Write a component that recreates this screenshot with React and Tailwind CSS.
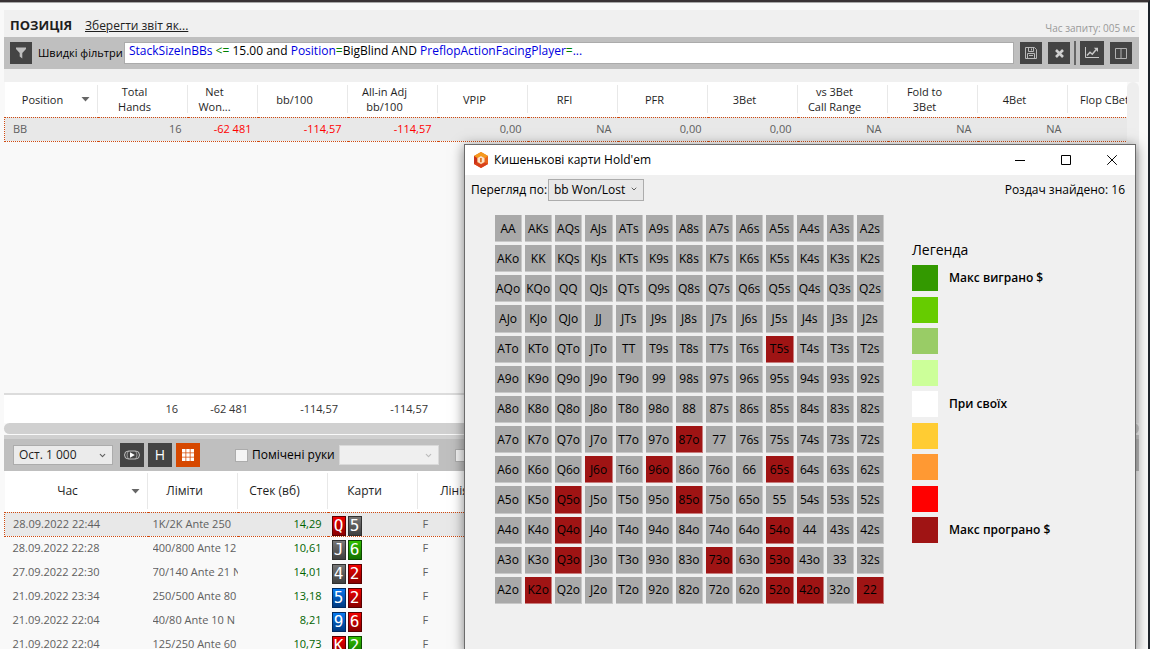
import { ChevronDown, X } from 'lucide-react'

const RANKS = 'AKQJT98765432'.split('')

const LOSING = new Set([
  'T5s', '87o', 'J6o', '96o', '65s', 'Q5o', '85o', 'Q4o',
  '54o', 'Q3o', '73o', '53o', 'K2o', '52o', '42o', '22',
])

const LEGEND = [
  { color: 'bg-[#339900]', label: 'Макс виграно $' },
  { color: 'bg-[#66cc00]' },
  { color: 'bg-[#99cc66]' },
  { color: 'bg-[#ccff99]' },
  { color: 'bg-white', label: 'При своїх' },
  { color: 'bg-[#ffcc33]' },
  { color: 'bg-[#ff9933]' },
  { color: 'bg-[#ff0000]' },
  { color: 'bg-[#9f1414]', label: 'Макс програно $' },
]

const STATS = [
  { title: ['Position'], width: 'w-[93px]', value: 'BB', sorted: true },
  { title: ['Total', 'Hands'], width: 'w-[90px]', value: '16', total: '16' },
  { title: ['Net', 'Won...'], width: 'w-[70px]', value: '-62 481', total: '-62 481' },
  { title: ['bb/100'], width: 'w-[90px]', value: '-114,57', total: '-114,57' },
  { title: ['All-in Adj', 'bb/100'], width: 'w-[90px]', value: '-114,57', total: '-114,57' },
  { title: ['VPIP'], width: 'w-[90px]', value: '0,00' },
  { title: ['RFI'], width: 'w-[90px]', value: 'NA' },
  { title: ['PFR'], width: 'w-[90px]', value: '0,00' },
  { title: ['3Bet'], width: 'w-[90px]', value: '0,00' },
  { title: ['vs 3Bet', 'Call Range'], width: 'w-[90px]', value: 'NA' },
  { title: ['Fold to', '3Bet'], width: 'w-[90px]', value: 'NA' },
  { title: ['4Bet'], width: 'w-[90px]', value: 'NA' },
  { title: ['Flop CBet'], width: 'w-[90px]', value: '' },
]

const HAND_COLUMNS = [
  { title: 'Час', width: 'w-[143px]', sorted: true },
  { title: 'Ліміти', width: 'w-[90px]' },
  { title: 'Стек (вб)', width: 'w-[90px]' },
  { title: 'Карти', width: 'w-[90px]' },
  { title: 'Лінія', width: 'w-[90px]' },
]

// suits: h - red, s - grey, c - green, d - blue
const HANDS = [
  { time: '28.09.2022 22:44', limit: '1K/2K Ante 250', stack: '14,29', cards: ['Qh', '5s'] },
  { time: '28.09.2022 22:28', limit: '400/800 Ante 12', stack: '10,61', cards: ['Js', '6c'] },
  { time: '27.09.2022 22:30', limit: '70/140 Ante 21 N', stack: '14,01', cards: ['4s', '2h'] },
  { time: '21.09.2022 23:34', limit: '250/500 Ante 80', stack: '13,18', cards: ['5d', '2h'] },
  { time: '21.09.2022 22:04', limit: '40/80 Ante 10 N', stack: '8,21', cards: ['9d', '6h'] },
  { time: '21.09.2022 22:04', limit: '125/250 Ante 60', stack: '10,73', cards: ['Kh', '2c'] },
]

const SUITS = {
  h: 'from-[#f00000] to-[#8a0000] border-[#5a0000]',
  s: 'from-[#777777] to-[#404040] border-[#303030]',
  c: 'from-[#30c000] to-[#147000] border-[#0c4a00]',
  d: 'from-[#0878f0] to-[#003a80] border-[#002a60]',
}

const SELECTED_ROW = 'h-6 border border-dotted border-[#d04a10] bg-[#e8e8e8]'

function handName(row, col) {
  if (row === col) return RANKS[row] + RANKS[col]
  return row < col ? `${RANKS[row]}${RANKS[col]}s` : `${RANKS[col]}${RANKS[row]}o`
}

function SortArrow() {
  return (
    <svg width="9" height="5" viewBox="0 0 9 5" className="shrink-0">
      <path d="M0.5 0h8L4.5 4.6z" fill="#666" />
    </svg>
  )
}

function Card({ card }) {
  return (
    <span className={`flex h-5 w-3.5 items-center justify-center border bg-linear-to-b font-['DejaVu_Sans_Mono',monospace] text-base leading-5 text-white ${SUITS[card[1]]}`}>
      {card[0]}
    </span>
  )
}

function ToolButton({ label, className = 'w-[22px] h-[22px] bg-[#444444]', children }) {
  return (
    <button type="button" aria-label={label} className={`flex shrink-0 items-center justify-center ${className}`}>
      {children}
    </button>
  )
}

function StatColumns() {
  return (
    <colgroup>
      {STATS.map(s => <col key={s.title.join(' ')} className={s.width} />)}
    </colgroup>
  )
}

function FilterBar() {
  return (
    <div className="flex h-8 shrink-0 items-center bg-[#bfbfbf] pr-[7px] pl-1.5">
      <ToolButton label="Фільтр">
        <svg width="10" height="12" viewBox="0 0 10 12">
          <path d="M0 0.5h10v1.5L6.3 6v5.5L3.7 9.5V6L0 2z" fill="#bdbdbd" />
        </svg>
      </ToolButton>
      <span className="ml-1.5 w-[86px] shrink-0 text-[11px] whitespace-nowrap text-black">Швидкі фільтри</span>
      <div
        role="textbox"
        aria-label="Швидкі фільтри"
        contentEditable
        suppressContentEditableWarning
        className="h-[22px] min-w-0 flex-1 overflow-hidden border border-[#ababab] bg-white px-1 leading-4 whitespace-nowrap text-black outline-none"
      >
        <span className="text-[#0000e0]">StackSizeInBBs</span> <span className="text-[#008000]">&lt;=</span> 15.00 and{' '}
        <span className="text-[#0000e0]">Position</span><span className="text-[#008000]">=</span>BigBlind AND{' '}
        <span className="text-[#0000e0]">PreflopActionFacingPlayer</span><span className="text-[#008000]">=</span>
        <span className="text-[#0000e0]">...</span>
      </div>
      <div className="ml-1.5 flex items-center gap-1.5">
        <ToolButton label="Зберегти">
          <svg width="12" height="12" viewBox="0 0 12 12" fill="none" stroke="#b8b8b8">
            <path d="M0.5 0.5h9l2 2v9h-11zM3.5 0.5v4h5v-4M2.5 11.500V6.500h7v5M6.500 1.500v2M4 8.500h4" />
          </svg>
        </ToolButton>
        <ToolButton label="Очистити">
          <svg width="9" height="9" viewBox="0 0 9 9" stroke="#d0d0d0" strokeWidth="2.6">
            <path d="M1 1l7 7M8 1L1 8" />
          </svg>
        </ToolButton>
      </div>
      <span className="mx-1 h-6 w-0.5 bg-[#666666]" />
      <div className="flex items-center gap-1.5">
        <ToolButton label="Графік" className="h-6 w-6 bg-[#444444]">
          <svg width="14" height="12" viewBox="0 0 14 12" fill="none" stroke="#c8c8c8">
            <path d="M0.5 0v10.5H14" />
            <path d="M2 8.5l3-3.3 2.3 2L11 2.8" strokeWidth="1.5" />
            <path d="M8.8 0.8H13V5z" fill="#c8c8c8" stroke="none" />
          </svg>
        </ToolButton>
        <ToolButton label="Колонки">
          <svg width="12" height="11" viewBox="0 0 12 11" fill="none" stroke="#b0b0b0">
            <path d="M0.5 0.5h11v10H0.5zM6 0.5v10" />
          </svg>
        </ToolButton>
      </div>
    </div>
  )
}

function StatsTable() {
  return (
    <table className="w-[1153px] table-fixed border-collapse text-[11px]">
      <StatColumns />
      <thead>
        <tr className="h-[35px] bg-white">
          {STATS.map(s => (
            <th key={s.title.join(' ')} scope="col" className="p-0 font-normal whitespace-nowrap">
              <div className="flex h-7 items-center border-r border-[#e8e8e8] pr-[7px]">
                <span className={`flex-1 text-center leading-[15px] ${s.sorted ? '' : 'pr-2'}`}>
                  {s.title.map(line => <span key={line} className="block">{line}</span>)}
                </span>
                {s.sorted && <SortArrow />}
              </div>
            </th>
          ))}
        </tr>
      </thead>
      <tbody>
        <tr className={SELECTED_ROW}>
          {STATS.map((s, i) => (
            <td
              key={s.title.join(' ')}
              className={`p-0 ${i === 0 ? 'pl-2 text-left' : 'pr-1.5 text-right'} ${s.value.startsWith('-') ? 'text-[#ff0000]' : 'text-[#606060]'}`}
            >
              {s.value}
            </td>
          ))}
        </tr>
      </tbody>
    </table>
  )
}

function TotalsTable() {
  return (
    <table className="w-[1153px] table-fixed border-collapse text-[11px] text-[#333333]">
      <StatColumns />
      <tbody>
        <tr className="h-7">
          {STATS.map(s => (
            <td key={s.title.join(' ')} className="p-0 pr-[9px] text-right">{s.total}</td>
          ))}
        </tr>
      </tbody>
    </table>
  )
}

function HandsToolbar() {
  return (
    <div className="flex h-8 shrink-0 items-center bg-[#bfbfbf] pl-[9px]">
      <div className="relative">
        <select aria-label="Кількість рук" className="h-5 w-[100px] appearance-none border border-[#acacac] bg-[#ebebeb] pl-[5px] leading-4">
          <option>Ост. 1 000</option>
        </select>
        <ChevronDown size={9} strokeWidth={3} className="pointer-events-none absolute top-1.5 right-1.5 text-[#606060]" />
      </div>
      <div className="ml-[7px] flex gap-1">
        <ToolButton label="Відтворити" className="h-6 w-6 bg-[#444444]">
          <svg width="16" height="10" viewBox="0 0 16 10" fill="none" stroke="#c0c0c0">
            <rect x="0.5" y="1" width="15" height="8" rx="4" />
            <path d="M5 1a5 5 0 0 0 0 8M11 1a5 5 0 0 1 0 8" strokeWidth="0.7" />
            <path d="M6 2.3L10.8 5L6 7.7z" fill="#fff" stroke="none" />
          </svg>
        </ToolButton>
        <ToolButton label="H" className="h-6 w-6 bg-[#444444] text-sm text-white">H</ToolButton>
        <ToolButton label="Матриця" className="h-6 w-6 bg-[#d64800]">
          <svg width="12" height="12" viewBox="0 0 12 12" fill="#fff">
            <path d="M0 0h3.500v3.500H0zM4.250 0h3.500v3.500h-3.500zM8.500 0H12v3.500H8.500zM0 4.250h3.500v3.500H0zM4.250 4.250h3.500v3.500h-3.500zM8.500 4.250H12v3.500H8.500zM0 8.500h3.500V12H0zM4.250 8.500h3.500V12h-3.500zM8.500 8.500H12V12H8.500z" />
          </svg>
        </ToolButton>
      </div>
      <label className="ml-[35px] flex items-center gap-1 whitespace-nowrap text-black">
        <input type="checkbox" className="h-[13px] w-[13px] appearance-none border border-[#acacac] bg-[#f4f4f4]" />
        <span className="w-20">Помічені руки</span>
      </label>
      <div className="relative ml-[7px]">
        <select aria-label="Мітка" className="h-5 w-[100px] appearance-none border border-[#d9d9d9] bg-[#efefef]" />
        <ChevronDown size={9} strokeWidth={3} className="pointer-events-none absolute top-1.5 right-1.5 text-[#bcbcbc]" />
      </div>
      <input
        type="checkbox"
        aria-label="Додатковий фільтр"
        className="ml-4 h-[13px] w-[13px] appearance-none border border-[#acacac] bg-[#f4f4f4]"
      />
    </div>
  )
}

function HandsTable() {
  return (
    <table className="w-[503px] table-fixed border-collapse text-[11px]">
      <thead>
        <tr className="h-[41px] bg-white">
          {HAND_COLUMNS.map(c => (
            <th key={c.title} scope="col" className={`p-0 text-xs font-normal ${c.width}`}>
              <div className="flex h-9 items-center border-r border-[#e8e8e8] pr-[7px]">
                <span className={`flex-1 text-center ${c.sorted ? '' : 'pr-2'}`}>{c.title}</span>
                {c.sorted && <SortArrow />}
              </div>
            </th>
          ))}
        </tr>
      </thead>
      <tbody className="text-[#606060]">
        {HANDS.map((h, i) => (
          <tr key={h.time + h.limit} className={i === 0 ? SELECTED_ROW : 'h-6'}>
            <td className="p-0 pl-2">{h.time}</td>
            <td className="p-0 pl-[5px]"><div className="overflow-hidden whitespace-nowrap">{h.limit}</div></td>
            <td className="p-0 pr-1.5 text-right text-[#006400]">{h.stack}</td>
            <td className="p-0 pt-[3px] pl-1">
              <div className="flex gap-0.5">
                {h.cards.map(c => <Card key={c} card={c} />)}
              </div>
            </td>
            <td className="p-0 pl-[5px]">F</td>
          </tr>
        ))}
      </tbody>
    </table>
  )
}

function PocketCardsDialog() {
  return (
    <section
      role="dialog"
      aria-label="Кишенькові карти Hold'em"
      className="absolute top-[142px] right-3 -bottom-1 left-[464px] overflow-hidden border border-[#6b6b6b] bg-[#f0f0f0] text-black shadow-[0_2px_12px_rgba(0,0,0,0.5)]"
    >
      <header className="flex h-[30px] items-center bg-white pl-2">
        <svg width="16" height="16" viewBox="0 0 16 16">
          <path d="M8 0l7 4v8l-7 4-7-4V4z" fill="#e8641c" />
          <path d="M8 0l7 4-3 2-4-2-4 2-3-2z" fill="#f59a1e" />
          <path d="M1 4l3 2v5l-3 1z" fill="#c9301a" />
          <path d="M15 12l-7 4-7-4 3-1.500 4 2 4-2z" fill="#d8401a" />
          <path d="M8 4l3.500 2v4L8 12l-3.500-2V6z" fill="#fbe3c8" />
          <path d="M7 6h1.800v4.200H7z" fill="#e07828" />
        </svg>
        <h2 className="ml-[5px] flex-1">Кишенькові карти Hold'em</h2>
        <button type="button" aria-label="Згорнути" className="flex h-full w-[46px] items-center justify-center">
          <svg width="10" height="10" viewBox="0 0 10 10"><path d="M0 5.500h10" stroke="#000" /></svg>
        </button>
        <button type="button" aria-label="Розгорнути" className="flex h-full w-[46px] items-center justify-center">
          <svg width="10" height="10" viewBox="0 0 10 10"><path d="M0.500 0.500h9v9h-9z" fill="none" stroke="#000" /></svg>
        </button>
        <button type="button" aria-label="Закрити" className="flex h-full w-[46px] items-center justify-center">
          <X size={18} strokeWidth={1.3} />
        </button>
      </header>

      <div className="flex h-[30px] items-center pr-2.5 pl-1.5">
        <label htmlFor="view-by" className="w-[77px] whitespace-nowrap">Перегляд по:</label>
        <div className="relative">
          <select id="view-by" className="h-[22px] w-24 appearance-none border border-[#acacac] bg-[#e8e8e8] pl-[5px] leading-4">
            <option>bb Won/Lost</option>
          </select>
          <ChevronDown size={8} strokeWidth={3} className="pointer-events-none absolute top-1.5 right-1.5 text-[#606060]" />
        </div>
        <span className="ml-auto">Роздач знайдено: 16</span>
      </div>

      <div className="flex pt-2.5 pl-[30px]">
        <div className="grid h-[389px] w-[389px] shrink-0 grid-cols-13 grid-rows-13 gap-[3px]">
          {RANKS.map((_, row) => RANKS.map((_, col) => {
            const name = handName(row, col)
            return (
              <div
                key={name}
                className={`flex items-center justify-center overflow-hidden border-r border-b pt-px whitespace-nowrap ${LOSING.has(name) ? 'border-[#c77c7c] bg-[#9f1414]' : 'border-[#c8c8c8] bg-[#a9a9a9]'}`}
              >
                {name}
              </div>
            )
          }))}
        </div>
        <div className="ml-7 pt-6">
          <h3 className="h-[26px] text-sm leading-[22px]">Легенда</h3>
          <ul className="flex h-[278px] flex-col justify-between">
            {LEGEND.map(l => (
              <li key={l.color} className="flex items-center gap-[11px] font-semibold">
                <span className={`h-[26px] w-[26px] ${l.color}`} />
                {l.label}
              </li>
            ))}
          </ul>
        </div>
      </div>
    </section>
  )
}

export default function App() {
  return (
    <div className="relative flex h-screen flex-col overflow-hidden border-t-2 border-r-2 border-t-[#3a3436] border-r-[#1d232b] bg-[#f9f9f9] font-['Open_Sans',sans-serif] text-xs text-[#1e1e1e]">
      <div className="h-2 shrink-0 border-t border-[#a8a8a8]" />
      <main className="mr-[9px] ml-1 flex min-h-0 flex-1 flex-col">
        <section className="flex min-h-0 flex-1 flex-col">
          <div className="flex h-[27px] shrink-0 items-center bg-[#f0f0f0] pr-1 pl-1.5">
            <h1 className="w-[75px] pt-1 text-[13px] font-bold">ПОЗИЦІЯ</h1>
            <a href="#save" className="pt-1 underline">Зберегти звіт як...</a>
            <span className="ml-auto pt-2.5 text-[10px] text-[#999999]">Час запиту: 005 мс</span>
          </div>
          <FilterBar />
          <div className="h-[13px] shrink-0 bg-[#f0f0f0]" />
          <div className="flex min-h-0 flex-1">
            <div className="flex min-w-0 flex-1 flex-col overflow-hidden">
              <StatsTable />
              <div className="flex-1" />
              <div className="border-t-2 border-[#dcdcdc] bg-white">
                <TotalsTable />
              </div>
            </div>
            <div className="w-3 shrink-0 rounded-t-md bg-[#eeeeee]" />
          </div>
          <div className="h-[11px] shrink-0 rounded-full bg-[#d0d0d0]" />
          <div className="mt-px h-1 shrink-0 bg-[#d0d0d0]" />
        </section>
        <section className="h-[210px] shrink-0 overflow-hidden">
          <HandsToolbar />
          <HandsTable />
        </section>
      </main>
      <PocketCardsDialog />
    </div>
  )
}
